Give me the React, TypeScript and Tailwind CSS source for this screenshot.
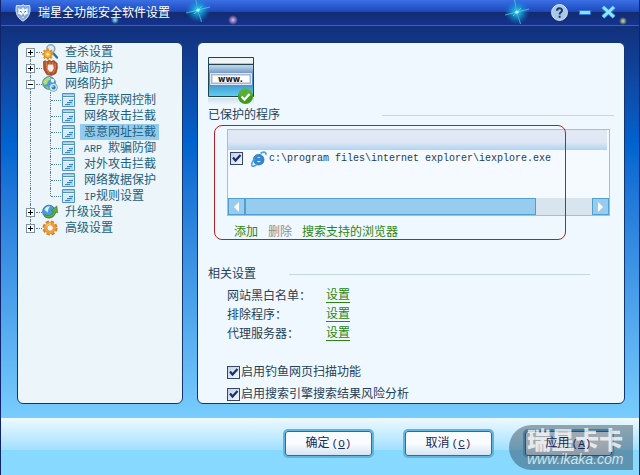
import type { ReactNode } from 'react'

type TreeLeaf = { id: string; latin?: string; label: string }
type TreeNode = { id: string; label: string; icon: ReactNode; children?: TreeLeaf[] }

const tree: TreeNode[] = [
  { id: 'scan', label: '查杀设置', icon: <ScanIcon /> },
  { id: 'guard', label: '电脑防护', icon: <GuardIcon /> },
  {
    id: 'network',
    label: '网络防护',
    icon: <GlobeIcon />,
    children: [
      { id: 'program', label: '程序联网控制' },
      { id: 'attack', label: '网络攻击拦截' },
      { id: 'url', label: '恶意网址拦截' },
      { id: 'arp', latin: 'ARP ', label: '欺骗防御' },
      { id: 'outbound', label: '对外攻击拦截' },
      { id: 'data', label: '网络数据保护' },
      { id: 'ip', latin: 'IP', label: '规则设置' },
    ],
  },
  { id: 'update', label: '升级设置', icon: <UpdateIcon /> },
  { id: 'advanced', label: '高级设置', icon: <GearIcon /> },
]

const settings = ['网站黑白名单：', '排除程序：', '代理服务器：']

const options = [
  { id: 'phishing', label: '启用钓鱼网页扫描功能' },
  { id: 'search', label: '启用搜索引擎搜索结果风险分析' },
]

const buttons = [
  { label: '确定', hotkey: 'O' },
  { label: '取消', hotkey: 'C' },
  { label: '应用', hotkey: 'A' },
]

function ScanIcon() {
  return (
    <svg viewBox="0 0 16 16" className="size-4 shrink-0">
      <path d="M11 9l4 4.5" stroke="#2c6f9c" strokeWidth="2.4" strokeLinecap="round" />
      <circle cx="8.8" cy="4.8" r="4" fill="#dceaf2" stroke="#8fa6ba" strokeWidth="1.6" />
      <path
        d="M5.8 4.6v2M5.8 13v2.8M.2 10.200h2M9 10.200h2.400M1.700 6.200l1.500 1.500M8.300 12.600l1.500 1.500M1.700 14.200l1.500-1.500M9.900 6.200L8.400 7.700"
        stroke="#e0921c"
        strokeWidth="2.2"
      />
      <circle cx="5.8" cy="10.200" r="3.800" fill="#f7b23a" stroke="#d98318" strokeWidth=".8" />
      <circle cx="5.8" cy="10.200" r="1.300" fill="#fff3d0" />
    </svg>
  )
}

function GuardIcon() {
  return (
    <svg viewBox="0 0 16 16" className="size-4 shrink-0">
      <path
        d="M1.500 1.500l2-.8 1.200 1.300L6.600.5l2 .3.800.8L11 .6l2 .6.6 1.400 1.400.4.400 5-1.500 5.400-4.500 2.200-4.500-1L1.800 9.500z"
        fill="#b5532c"
        stroke="#8a3718"
        strokeWidth=".7"
      />
      <path d="M5.800 4.400h5.400l.6 4-1.800 3.400H7.600L5.400 9z" fill="#f6eee9" />
      <path d="M4.200 2l.8 7 2 4.500M7.800 1.800l.2 2.400M10.800 2v2.400M13 3.500l.4 5-2.400 4.500" fill="none" stroke="#d88a5c" strokeWidth=".9" />
    </svg>
  )
}

function GlobeIcon() {
  return (
    <svg viewBox="0 0 16 16" className="size-4 shrink-0">
      <circle cx="7" cy="7" r="6.400" fill="#4a9bd6" stroke="#2c74ad" strokeWidth=".7" />
      <path d="M1 6c1-3 4-5 7-5l1 2-3 2-1 3-3 1z" fill="#b6dd74" />
      <path d="M9 2.600l3.400 1-.6 3-3-.6z" fill="#e9f7f4" />
      <path d="M3 10l3 .4 1 2.600c-2 0-3.400-1.200-4-3z" fill="#8bc860" />
      <circle cx="11.400" cy="11.400" r="4" fill="#dcecf6" stroke="#5c98c2" strokeWidth=".8" />
      <circle cx="11.600" cy="11.400" r="2.100" fill="#3579ad" />
      <circle cx="10.900" cy="10.700" r=".7" fill="#fff" />
    </svg>
  )
}

function UpdateIcon() {
  return (
    <svg viewBox="0 0 16 16" className="size-4 shrink-0">
      <circle cx="7" cy="7.600" r="6.400" fill="#4a9fd8" stroke="#236ca6" strokeWidth=".8" />
      <path d="M2.400 5.600C3.600 3 6 2 8 2.200L6.400 5 5.600 8.600z" fill="#dff2fb" />
      <path
        d="M3 10.400c3 2 7 1.200 8.400-3L9.200 6.600 14.800 2l.8 6.800-1.800-.8c-1.600 5.600-7.400 7.400-11.200 4.400z"
        fill="#63ad45"
        stroke="#35812a"
        strokeWidth=".7"
      />
    </svg>
  )
}

function GearIcon() {
  return (
    <svg viewBox="0 0 16 16" className="size-4 shrink-0">
      <circle cx="8" cy="8" r="6.200" fill="none" stroke="#d08026" strokeWidth="2.600" strokeDasharray="3.200 1.670" />
      <circle cx="8" cy="8" r="4.200" fill="none" stroke="#eb9c3e" strokeWidth="3.400" />
      <path d="M4 6.400C5 4.400 7 3.600 9 4" fill="none" stroke="#f9cc85" strokeWidth="1.200" />
      <circle cx="8.300" cy="8" r="2.400" fill="#fdf6ea" />
    </svg>
  )
}

function PageIcon() {
  return (
    <svg viewBox="0 0 13 14" className="h-3.5 w-[13px] shrink-0">
      <path d="M.5.5h12v13H.5z" fill="#d6ecf9" stroke="#4f94c4" />
      <path d="M1 1h11v1.500H1z" fill="#9ccbe8" />
      <path d="M1 3.500h11" stroke="#4f94c4" />
      <path d="M1 4h11v1H1z" fill="#fff" />
      <path d="M2.500 12.500L11 5.500v7z" fill="#a8d3ef" />
      <path d="M7 7.500h4M5 9.500h5M3 11.500h5" stroke="#3f87be" />
    </svg>
  )
}

function ShieldIcon() {
  return (
    <svg viewBox="0 0 16 18" className="h-[18px] w-4 shrink-0">
      <path
        d="M8 .8l2 1 4.500-.4c1.200 5 .8 11.600-6.500 15.800C.7 13 .3 6.400 1.500 1.400L6 1.800z"
        fill="#86a9da"
        stroke="#dbe9fa"
      />
      <path d="M8 3l1.500 2.200 3.500-1-.6 3.800 1 1.800-2.800.6L8 14.500l-2.600-4.100-2.800-.6 1-1.800L3 4.200l3.500 1z" fill="#eef6ff" />
      <path d="M5 7.200l2 1.200M11 7.200L9 8.400M8 9.600v2.400M6.500 12h3" stroke="#4a78ba" />
    </svg>
  )
}

function BrowserIcon() {
  return (
    <svg viewBox="0 0 16 16" className="size-4 shrink-0">
      <path
        d="M13 9.600H5.400c.2 2.400 3.200 2.800 4.400 1h3C11 15.200 2.800 15.400 2.400 8.600 2.400 1.600 13.400 1.400 13 9.600zM5.500 7.200h4.500C9.700 4.800 5.900 4.800 5.500 7.200z"
        fill="#2f8fdc"
        stroke="#1c6bb5"
        strokeWidth=".8"
      />
      <path
        d="M9.500 2.200C13 .6 15.600.6 14.800 4M3.400 7.600C.6 11.600-.2 14.800 1.600 15.200c1.200.2 3-.8 4-1.600"
        fill="none"
        stroke="#4aa3e2"
        strokeWidth="1.600"
      />
    </svg>
  )
}

function SiteIcon() {
  return (
    <svg viewBox="0 0 47 50" className="h-[50px] w-[47px]" role="img" aria-label="www">
      <defs>
        <linearGradient id="site-body" x1="0" y1="0" x2="0" y2="1">
          <stop offset="0" stopColor="#c4d6e8" />
          <stop offset=".3" stopColor="#5f8fc0" />
          <stop offset=".6" stopColor="#4096cc" />
          <stop offset="1" stopColor="#5fcdf0" />
        </linearGradient>
        <linearGradient id="site-mirror" x1="0" y1="0" x2="0" y2="1">
          <stop offset="0" stopColor="#cfe0ea" />
          <stop offset="1" stopColor="#f0f8ff" />
        </linearGradient>
      </defs>
      <path d="M0 41h46v7H0z" fill="url(#site-mirror)" />
      <path d="M.5.5h45v39H.5z" fill="#eef3f3" stroke="#1f4452" />
      <path d="M1 7.500h44" stroke="#1f4452" strokeWidth="1.500" />
      <path d="M1 8.500h44V39H1z" fill="url(#site-body)" />
      <path d="M3.500 17.500h39v9h-39z" fill="#fff" stroke="#a9b4da" strokeWidth="2" />
      <path d="M2.500 16.500h41v11h-41z" fill="none" stroke="#e3e8f6" />
      <text x="10" y="25" fontSize="8" fontWeight="700" fontFamily="DejaVu Sans, sans-serif" fill="#161616">
        www.
      </text>
      <circle cx="37.500" cy="39.500" r="7.600" fill="#3f9b1e" />
      <path d="M30.500 38a7 7 0 0 1 14 0c-4 2-10 2-14 0z" fill="#6dbb3d" opacity=".6" />
      <path d="M33.500 39.500l3 3 5-5.500" fill="none" stroke="#fff" strokeWidth="2.300" />
    </svg>
  )
}

function Star({ className }: { className: string }) {
  return (
    <svg viewBox="0 0 26 26" className={`pointer-events-none absolute size-[26px] ${className}`}>
      <defs>
        <radialGradient id="star-glow">
          <stop offset="0" stopColor="#35d8f0" />
          <stop offset=".45" stopColor="#14a8d8" stopOpacity=".7" />
          <stop offset="1" stopColor="#1478d0" stopOpacity="0" />
        </radialGradient>
      </defs>
      <circle cx="13" cy="13" r="12.500" fill="url(#star-glow)" />
      <path d="M10.500 1L13 13l3.500 12M1 16l12-3 12-3M9 17l8-8" stroke="#5fdcf0" strokeWidth=".7" />
      <circle cx="13" cy="13" r="1.600" fill="#c8f4ff" />
    </svg>
  )
}

function CheckBox({ id }: { id: string }) {
  return (
    <span className="relative grid size-[13px] shrink-0">
      <input
        id={id}
        type="checkbox"
        defaultChecked
        className="peer size-[13px] appearance-none border border-[#34466c] bg-linear-to-br from-[#c3d2e4] to-[#f2f8ff]"
      />
      <svg viewBox="0 0 13 13" className="pointer-events-none absolute inset-0 hidden size-[13px] peer-checked:block">
        <path d="M3 5.500l2.500 3L10.500 3" fill="none" stroke="#1d2e6c" strokeWidth="2.200" />
      </svg>
    </span>
  )
}

function TreeRow({ node, first, last }: { node: TreeNode; first: boolean; last: boolean }) {
  const open = Boolean(node.children)
  return (
    <div className="flex h-4 items-center">
      <span className="flex h-4 w-[9px] flex-col items-center">
        <span className={first ? 'flex-1' : 'flex-1 border-l border-dotted border-[#4f7f9c]'} />
        <button
          aria-label={node.label}
          aria-expanded={open}
          className="relative size-[9px] border border-[#7d93a5] bg-white"
        >
          <span className="absolute top-[3px] left-px h-px w-[5px] bg-black" />
          {!open && <span className="absolute top-px left-[3px] h-[5px] w-px bg-black" />}
        </button>
        <span className={last ? 'flex-1' : 'flex-1 border-l border-dotted border-[#4f7f9c]'} />
      </span>
      <span className="ml-px w-1.5 border-t border-dotted border-[#4f7f9c]" />
      {node.icon}
      <span className="ml-[7px]">{node.label}</span>
    </div>
  )
}

function LeafRow({ leaf, last }: { leaf: TreeLeaf; last: boolean }) {
  const active = leaf.id === 'url'
  return (
    <li className="flex h-4 items-center">
      <span className="ml-1 w-5 self-stretch border-l border-dotted border-[#4f7f9c]" />
      <span className={`border-l border-dotted border-[#4f7f9c] ${last ? 'h-2 self-start' : 'self-stretch'}`} />
      <span className="mr-px w-2.5 border-t border-dotted border-[#4f7f9c]" />
      <PageIcon />
      <a href="#" className={`ml-[5px] h-4 pr-[3px] pl-1 whitespace-pre ${active ? 'bg-[#92cbec]' : ''}`}>
        {leaf.latin && <span className="font-['Liberation_Mono',monospace] text-[10px]">{leaf.latin}</span>}
        {leaf.label}
      </a>
    </li>
  )
}

function Sidebar() {
  return (
    <nav className="w-[166px] shrink-0 rounded-md border border-[#12356f] bg-[#ecf5f9] pt-px pl-2 leading-4 text-[#22607f]">
      <ul>
        {tree.map((node, i) => (
          <li key={node.id}>
            <TreeRow node={node} first={i === 0} last={i === tree.length - 1} />
            {node.children && (
              <ul>
                {node.children.map((leaf, j) => (
                  <LeafRow key={leaf.id} leaf={leaf} last={j === node.children!.length - 1} />
                ))}
              </ul>
            )}
          </li>
        ))}
      </ul>
    </nav>
  )
}

function ProgramList() {
  return (
    <div className="mr-1 ml-[19px] border border-[#9bc3dc] bg-[#f4faff]">
      <div className="mr-0.5 h-5 bg-linear-to-b from-[#dfe8f4] from-60% to-[#b0d3f3]" />
      <div className="h-12">
        <label htmlFor="iexplore" className="flex h-[17px] items-center pl-0.5">
          <CheckBox id="iexplore" />
          <span className="ml-2 flex items-center gap-0.5">
            <BrowserIcon />
            <span className="font-['Liberation_Mono',monospace] text-[10px] whitespace-nowrap text-[#1c3c54]">
              c:\program files\internet explorer\iexplore.exe
            </span>
          </span>
        </label>
      </div>
      {/* Scroll bar */}
      <div className="flex h-[17px] bg-[#d8e5ee]">
        <button aria-label="向左" className="grid w-[17px] place-items-center border border-[#4f9fd0] bg-[#97ccee]">
          <svg viewBox="0 0 5 10" className="h-2.5 w-[5px]">
            <path d="M5 0v10L0 5z" fill="#fff" />
          </svg>
        </button>
        <div className="flex-1">
          <div className="h-full w-[84%] border border-[#4f9fd0] bg-[#97ccee]" />
        </div>
        <button aria-label="向右" className="grid w-[17px] place-items-center border border-[#4f9fd0] bg-[#97ccee]">
          <svg viewBox="0 0 5 10" className="h-2.5 w-[5px]">
            <path d="M0 0v10l5-5z" fill="#fff" />
          </svg>
        </button>
      </div>
    </div>
  )
}

function SettingsPanel() {
  return (
    <main className="min-w-0 flex-1 rounded-md border border-[#12356f] bg-[#f0f8ff] px-2.5 pt-3.5 leading-[14px] text-[#24405a]">
      <SiteIcon />
      <h2 className="mt-px flex items-center">
        <span className="w-[174px]">已保护的程序</span>
        <span className="h-px flex-1 bg-[#c6d8df]" />
      </h2>

      <section className="relative mt-[7px]">
        <ProgramList />
        <div className="mt-[9px] ml-[26px] flex gap-2.5 text-[#2a8512]">
          <a href="#">添加</a>
          <button disabled className="text-[#8f8f8f]">
            删除
          </button>
          <a href="#">搜索支持的浏览器</a>
        </div>
        <div className="pointer-events-none absolute -top-1 right-12 -bottom-px left-1.5 rounded-lg border border-[#b32025]" />
      </section>

      <h2 className="mt-7 mr-6 flex items-center">
        <span className="w-[81px]">相关设置</span>
        <span className="h-px flex-1 bg-[#c6d8df]" />
      </h2>
      <ul className="mt-[5px] ml-[19px]">
        {settings.map((name) => (
          <li key={name} className="flex h-[19px] items-center">
            <span className="w-[99px]">{name}</span>
            <a href="#" className="border-b border-[#2a8512] text-[#2a8512]">
              设置
            </a>
          </li>
        ))}
      </ul>

      <div className="mt-[22px] ml-[19px] grid gap-2">
        {options.map((o) => (
          <label key={o.id} htmlFor={o.id} className="flex items-center">
            <CheckBox id={o.id} />
            <span className="ml-px">{o.label}</span>
          </label>
        ))}
      </div>
    </main>
  )
}

function TitleBar() {
  return (
    <header className="relative flex h-[26px] items-center overflow-hidden border-b border-[#2b62de] bg-linear-to-b from-[#3a70e4] via-[#1c47bd] via-48% to-[#143292] pr-[23px] pl-3.5 text-white">
      <div className="absolute inset-x-0 top-3 bottom-0 bg-linear-to-b from-[#132b6e] to-[#143390]" />
      <Star className="-top-[3px] left-[184px]" />
      <Star className="-top-px right-[109px]" />
      <span className="absolute top-4 left-[110px] size-2 rounded-full bg-radial from-[#8ff4fa] to-transparent to-70%" />
      <span className="absolute top-[15px] left-[227px] size-2.5 rounded-full bg-radial from-[#f6b8e8] to-transparent to-70%" />
      <span className="absolute top-[17px] right-3 size-2 rounded-full bg-radial from-[#dbe87a] to-transparent to-70%" />
      <h1 className="relative flex flex-1 items-center gap-[7px]">
        <ShieldIcon />
        瑞星全功能安全软件设置
      </h1>
      <div className="relative flex items-center">
        <button aria-label="帮助">
          <svg viewBox="0 0 17 17" className="size-[17px]">
            <circle cx="8.500" cy="8.500" r="7.900" fill="#a9c9e8" stroke="#d5e6f6" />
            <path
              d="M6 6.800C6 3.400 11 3.600 11 6.400c0 1.800-2.400 1.800-2.400 4M8.600 11.800v2"
              fill="none"
              stroke="#1d3768"
              strokeWidth="2"
            />
          </svg>
        </button>
        <button aria-label="最小化" className="ml-[11px]">
          <svg viewBox="0 0 12 17" className="h-[17px] w-3">
            <path d="M.5 6.500h11v4H.5z" fill="#86e4fb" stroke="#3078e0" />
          </svg>
        </button>
        <button aria-label="关闭" className="ml-2.5">
          <svg viewBox="0 0 15 15" className="size-[15px]">
            <path d="M2 2l11 10M13 2L2 12" stroke="#3078e0" strokeWidth="4.600" />
            <path d="M2 2l11 10M13 2L2 12" stroke="#8ce8fc" strokeWidth="3" />
          </svg>
        </button>
      </div>
    </header>
  )
}

function Footer() {
  return (
    <footer className="relative h-[57px] bg-[#87d9ff]">
      <div className="flex h-8 items-start justify-end gap-[29px] bg-linear-to-b from-[#eef9ff] to-[#a0e0ff] pt-[11px] pr-[25px]">
        {buttons.map((b) => (
          <button
            key={b.hotkey}
            className="h-[29px] w-[91px] shrink-0 rounded-[5px] border-2 border-[#62b4dd] bg-linear-to-b from-[#f8fcff] from-50% to-[#d3e2f2] text-[#17275c] inset-ring inset-ring-[#2a6ca6]"
          >
            <span className="relative z-10">
              {b.label}
              <span className="ml-0.5 font-['Liberation_Mono',monospace] text-[11px]">
                (<u>{b.hotkey}</u>)
              </span>
            </span>
          </button>
        ))}
      </div>
      <div className="pointer-events-none absolute top-[7px] right-1.5 h-[45px] w-[124px] rounded-l-full bg-[#1c2c3c]/40 pl-[18px] text-white/75">
        <p className="pt-1 text-[24px] leading-6 font-black whitespace-nowrap">瑞星卡卡</p>
        <p className="font-['Liberation_Sans',sans-serif] text-sm leading-3 italic">www.ikaka.com</p>
      </div>
    </footer>
  )
}

export default function App() {
  return (
    <div className="flex min-h-screen flex-col border-x border-[#10246c] bg-[#87d9ff] font-['Liberation_Sans','Noto_Sans_CJK_SC',sans-serif] text-xs">
      <TitleBar />
      <div className="flex flex-1 gap-3.5 bg-linear-to-b from-[#11307c] via-[#0063cf] via-30% to-[#78cdfd] pt-4 pr-3.5 pb-3.5 pl-4">
        <Sidebar />
        <SettingsPanel />
      </div>
      <Footer />
    </div>
  )
}
